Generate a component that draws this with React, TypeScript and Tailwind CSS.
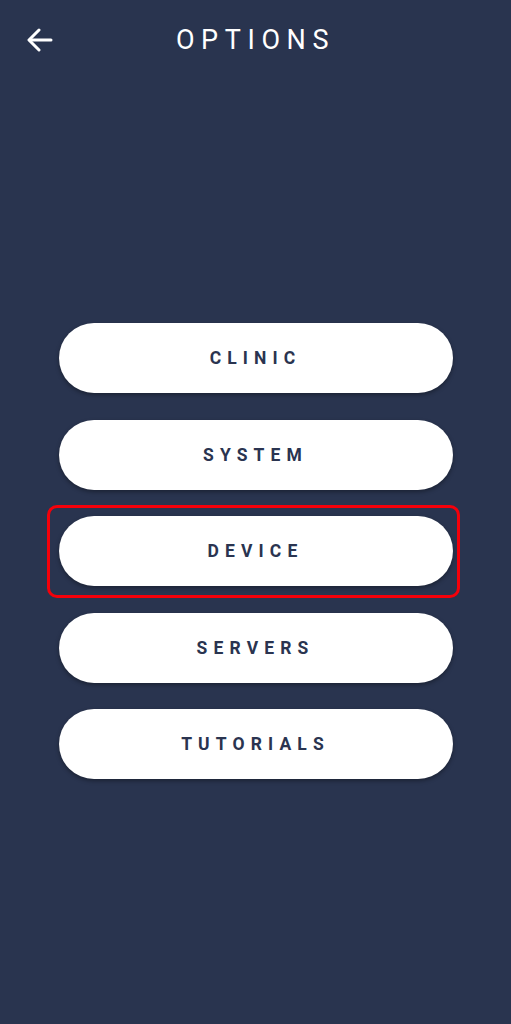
import React from "react";

const items = ["CLINIC", "SYSTEM", "DEVICE", "SERVERS", "TUTORIALS"];

export default function App() {
  return (
    <div
      className="w-[511px] h-[1024px] bg-[#29344f] flex flex-col"
      style={{ fontFamily: "Roboto, 'Liberation Sans', sans-serif" }}
    >
      <div className="relative h-[80px] flex items-center justify-center">
        <button className="absolute left-[27px] top-[28px] w-[26px] h-[24px] flex items-center justify-center">
          <svg width="26" height="24" viewBox="0 0 26 24" fill="none" stroke="white" strokeWidth="3" strokeLinecap="round" strokeLinejoin="round">
            <path d="M24 12H3" />
            <path d="M12 2L2 12l10 10" />
          </svg>
        </button>
        <h1 className="text-white text-[27px] font-normal tracking-[0.245em] leading-none mt-[1px]">
          OPTIONS
        </h1>
      </div>
      <div className="flex flex-col items-center gap-[26.5px] mt-[243px]">
        {items.map((t) => (
          <div key={t} className="relative">
            {t === "DEVICE" && (
              <div className="absolute -top-[11px] -left-[12px] -right-[7px] -bottom-[12px] border-[3px] border-[#f5000a] rounded-[10px]" />
            )}
            <button className="relative w-[394px] h-[70px] bg-white rounded-full shadow-[0_2px_4px_rgba(0,0,0,0.35)] flex items-center justify-center">
              <span className="text-[#2a3450] text-[17.5px] font-bold tracking-[0.35em] leading-none mt-[2px]">
                {t}
              </span>
            </button>
          </div>
        ))}
      </div>
    </div>
  );
}
